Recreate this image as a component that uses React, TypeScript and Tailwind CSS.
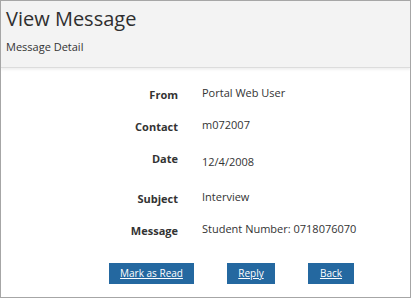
const ROWS: { label: string; value: string; h: string; vpad: string }[] = [
  { label: 'From', value: 'Portal Web User', h: 'h-[32px]', vpad: 'pt-0' },
  { label: 'Contact', value: 'm072007', h: 'h-[32px]', vpad: 'pt-0' },
  { label: 'Date', value: '12/4/2008', h: 'h-[40px]', vpad: 'pt-[5px]' },
  { label: 'Subject', value: 'Interview', h: 'h-[32px]', vpad: 'pt-0' },
  { label: 'Message', value: 'Student Number: 0718076070', h: 'h-[32px]', vpad: 'pt-0' },
]

export default function App() {
  return (
    <div
      className="w-[411px] h-[298px] border border-[#a6a6a6] bg-white text-[#333] flex flex-col overflow-hidden"
      style={{ fontFamily: '"Open Sans", "Liberation Sans", sans-serif' }}
    >
      {/* header */}
      <div className="h-[67px] bg-[#f3f3f3] px-[5px] pt-[3px] border-b border-[#dcdcdc] shadow-[0_2px_2px_rgba(0,0,0,0.06)]">
        <div className="text-[20px] leading-[30px] text-[#2f2f2f]">View Message</div>
        <div className="text-[11px] leading-[16px] mt-[5px] text-[#333]">Message Detail</div>
      </div>

      {/* details */}
      <div className="pt-[16px] flex flex-col">
        {ROWS.map((r) => (
          <div key={r.label} className={`flex ${r.h}`}>
            <div className="w-[177px] text-right font-bold text-[11px] leading-[18px] pt-[2px]">{r.label}</div>
            <div className={`ml-[24px] text-[11px] leading-[18px] ${r.vpad}`}>{r.value}</div>
          </div>
        ))}
      </div>

      {/* buttons */}
      <div className="flex gap-[33px] pl-[108px] mt-[11px]">
        <button className="h-[21px] w-[85px] bg-[#2468a0] text-white text-[10px] underline">Mark as Read</button>
        <button className="h-[21px] w-[48px] bg-[#2468a0] text-white text-[10px] underline">Reply</button>
        <button className="h-[21px] w-[46px] bg-[#2468a0] text-white text-[10px] underline">Back</button>
      </div>
    </div>
  )
}
